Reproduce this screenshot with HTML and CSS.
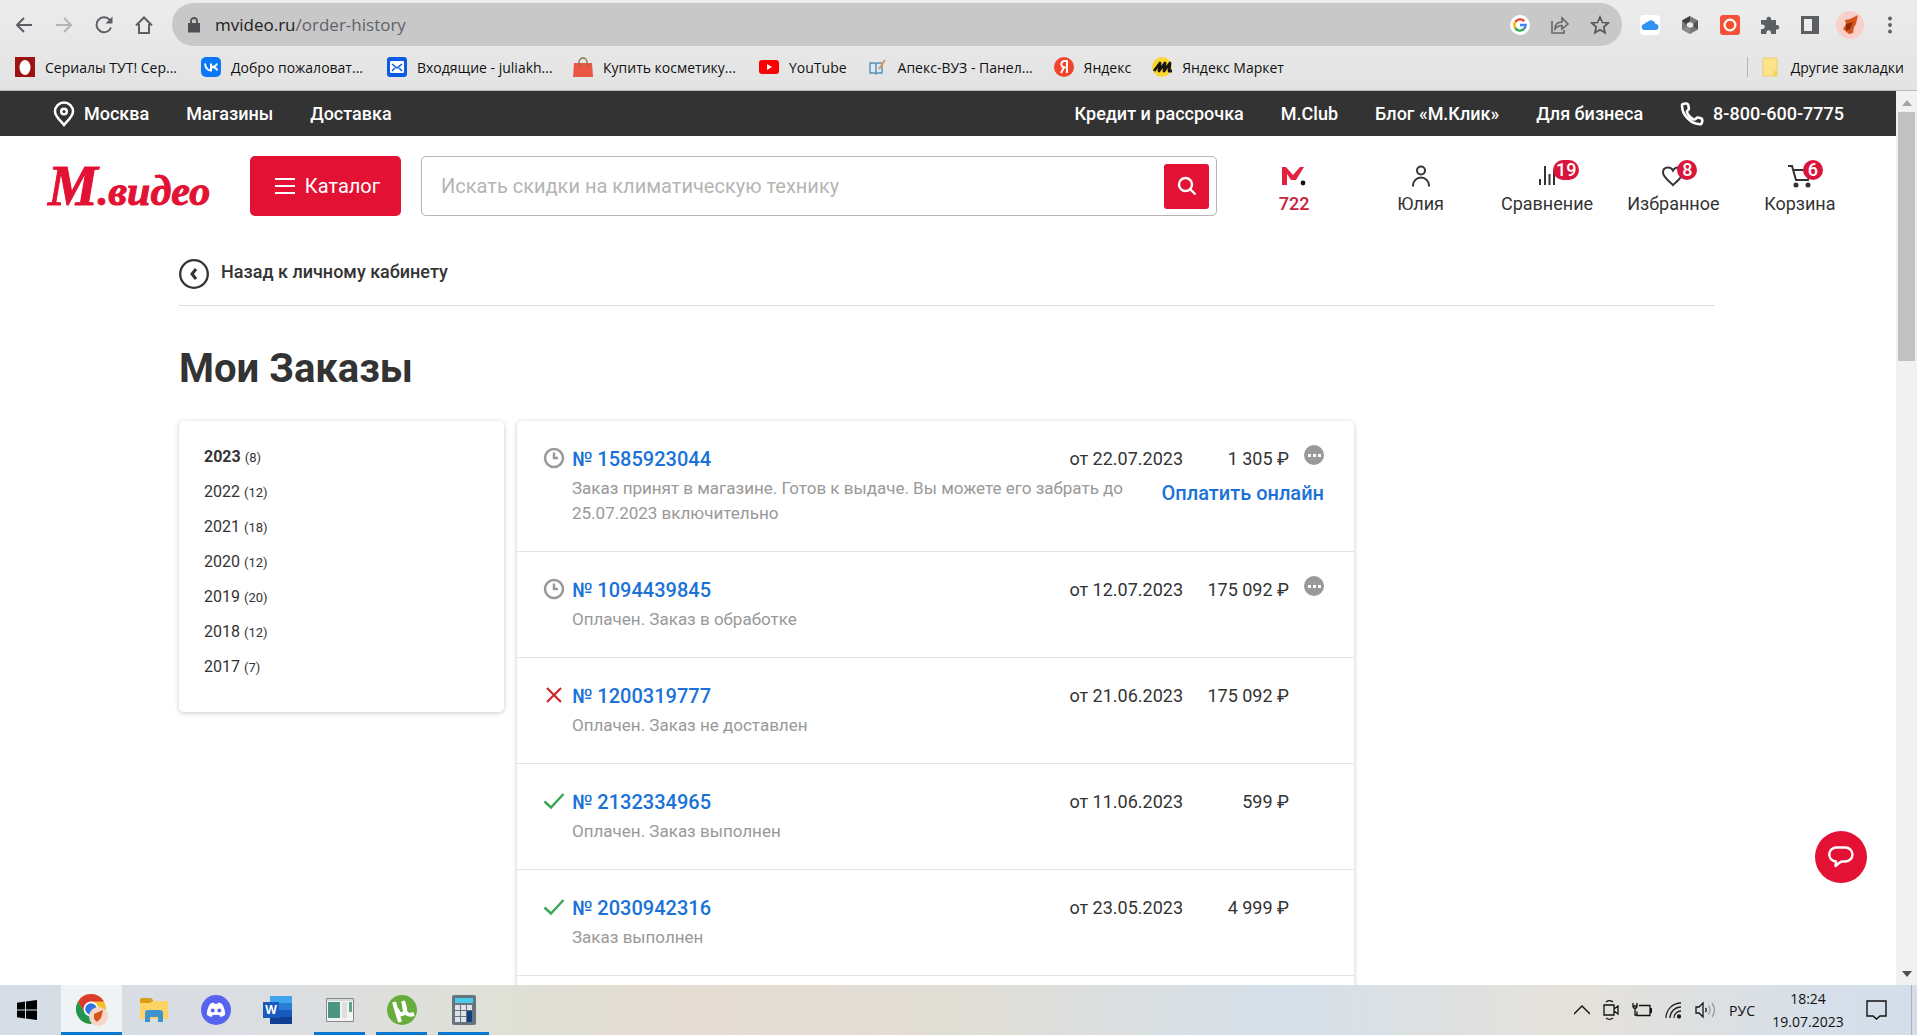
FILE: index.html
```html
<!DOCTYPE html>
<html lang="ru">
<head>
<meta charset="utf-8">
<meta name="viewport" content="width=device-width, initial-scale=1">
<title>Мои Заказы</title>
<link rel="stylesheet" href="styles.css">
</head>
<body>
<header class="browser">
  <div class="toolbar">
    <button class="tool" aria-label="Назад"><svg width="20" height="20" viewBox="0 0 20 20" fill="none" stroke="#5b5e62" stroke-width="2"><path d="M18 10H3M10 3l-7 7 7 7"/></svg></button>
    <button class="tool" aria-label="Вперёд"><svg width="20" height="20" viewBox="0 0 20 20" fill="none" stroke="#b3b5b7" stroke-width="2"><path d="M2 10h15M10 3l7 7-7 7"/></svg></button>
    <button class="tool" aria-label="Обновить"><svg width="20" height="20" viewBox="0 0 20 20" fill="none" stroke="#5b5e62" stroke-width="2"><path d="M17 12.500A7.500 7.500 0 1 1 15.800 5L17 6.500"/><path d="M18.500 1.500v7h-7z" fill="#5b5e62" stroke="none"/></svg></button>
    <button class="tool" aria-label="Домой"><svg width="20" height="20" viewBox="0 0 20 20" fill="none" stroke="#5b5e62" stroke-width="2"><path d="M2 10.500 10 2.500l8 8M5 9v9h10V9"/></svg></button>
    <div class="omnibox">
      <svg width="14" height="16" viewBox="0 0 14 16"><path d="M1 6h12v9.500H1z" fill="#4e5054"/><path d="M4 7V4a3 3 0 0 1 6 0v3" fill="none" stroke="#4e5054" stroke-width="1.800"/></svg>
      <div class="url"><span class="host">mvideo.ru</span>/order-history</div>
      <button class="tool" aria-label="Google"><svg width="20" height="20" viewBox="0 0 20 20" fill="none" stroke-width="2.400"><circle cx="10" cy="10" r="10" fill="#fff"/><path d="M14.200 6.200A5.600 5.600 0 0 0 5.300 7" stroke="#ea4335"/><path d="M5.300 7a5.600 5.600 0 0 0 0 6" stroke="#fbbc05"/><path d="M5.300 13a5.600 5.600 0 0 0 8.500 1.200" stroke="#34a853"/><path d="M13.800 14.200a5.600 5.600 0 0 0 1.800-4.200H10" stroke="#4285f4"/></svg></button>
      <button class="tool" aria-label="Поделиться"><svg width="20" height="20" viewBox="0 0 20 20" fill="none" stroke="#65686b" stroke-width="1.600"><path d="M2 6v12h12v-3M5 14c0-5 3-7 7-7V3l6 6-6 5v-3.500c-3 0-5 1-7 3.500z"/></svg></button>
      <button class="tool" aria-label="В закладки"><svg width="20" height="20" viewBox="0 0 20 20" fill="none" stroke="#55585c" stroke-width="1.700"><path d="m10 2 2.400 5.500 5.800.500-4.400 4 1.300 5.800L10 14.800l-5.100 3L6.200 12l-4.400-4 5.800-.500z"/></svg></button>
    </div>
    <div class="extensions">
      <button class="tool" aria-label="iCloud"><svg width="20" height="20" viewBox="0 0 20 20"><rect width="20" height="20" rx="4" fill="#fff"/><path d="M5 15a3 3 0 0 1-.5-6 4 4 0 0 1 3-2A4.500 4.500 0 0 1 15.500 9 3 3 0 0 1 15.500 15z" fill="#2f93f3"/></svg></button>
      <button class="tool" aria-label="Расширение"><svg width="20" height="20" viewBox="0 0 20 20"><path d="m10 1 8 4.500v9L10 19l-8-4.500v-9z" fill="#77797b"/><path d="M10 1v5l-4 3-4-3.500z" fill="#3c3d3f"/><path d="M2 14.500 6 12l4 2v5z" fill="#8a8b8d"/><path d="m18 14.500-4-2.500V8l4-2.500z" fill="#505254"/><path d="m10 7 3 1.500v3L10 13l-3-1.500v-3z" fill="#eaeaea"/></svg></button>
      <button class="tool" aria-label="Запись экрана"><svg width="20" height="20" viewBox="0 0 20 20"><rect width="20" height="20" rx="3" fill="#f4503a"/><circle cx="10" cy="10" r="5.400" fill="#f4502a" stroke="#fff" stroke-width="2.200"/></svg></button>
      <button class="tool" aria-label="Расширения"><svg width="20" height="20" viewBox="0 0 20 20"><path d="M1 5h5.500V4a2.300 2.300 0 0 1 4.600 0v1H16v5h1a2.300 2.300 0 0 1 0 4.600h-1V19h-5v-1.500a2.300 2.300 0 0 0-4.600 0V19H1v-5h1.500a2.300 2.300 0 0 0 0-4.600H1z" fill="#5b5e62"/></svg></button>
      <button class="tool" aria-label="Боковая панель"><svg width="20" height="20" viewBox="0 0 20 20"><path d="M1 1h18v18H1z" fill="#5b5e62"/><path d="M4 4h8v12H4z" fill="#ececec"/></svg></button>
      <button class="tool" aria-label="Профиль"><svg width="28" height="28" viewBox="0 0 28 28"><circle cx="14" cy="14" r="14" fill="#f8cfcb"/><path d="M9 9l5-1 8-4-2 9-2 3-1 6-4 1-6-5 3-5z" fill="#d6541a"/><path d="m10 13 7-2-3 7-4 2z" fill="#8e2c0d"/></svg></button>
      <button class="tool" aria-label="Меню"><svg width="20" height="20" viewBox="0 0 20 20" fill="#5b5e62"><circle cx="10" cy="3.500" r="1.900"/><circle cx="10" cy="10" r="1.900"/><circle cx="10" cy="16.500" r="1.900"/></svg></button>
    </div>
  </div>
  <nav class="bookmarks" aria-label="Закладки">
    <a class="mark cut" href="#"><svg width="20" height="20" viewBox="0 0 20 20"><rect width="20" height="20" fill="#9c1313"/><ellipse cx="10" cy="10.500" rx="5.500" ry="7.500" fill="#fff"/></svg><span>Сериалы ТУТ! Сер...</span></a>
    <a class="mark cut" href="#"><svg width="20" height="20" viewBox="0 0 20 20"><rect width="20" height="20" rx="5" fill="#0b78f7"/><path d="M4 6.500c.500 4.500 2.500 7 6 7v-7M16 6.500c-.500 2-2.500 3.500-6 3.500 3.500 0 5.500 1.500 6.300 3.500" fill="none" stroke="#fff" stroke-width="2"/></svg><span>Добро пожаловат...</span></a>
    <a class="mark cut" href="#"><svg width="20" height="20" viewBox="0 0 20 20"><rect width="20" height="20" rx="3" fill="#0d5be0"/><rect x="3" y="4" width="14" height="12" rx="1" fill="#fff"/><path d="m5 7 5 4 5-4M5 14l3-3M15 14l-3-3" fill="none" stroke="#0d5be0" stroke-width="1.500"/></svg><span>Входящие - juliakh...</span></a>
    <a class="mark cut" href="#"><svg width="20" height="20" viewBox="0 0 20 20"><path d="M1 6h18l1 14H0z" fill="#ea5742"/><path d="M6 10V5a4 4 0 0 1 8 0v5" fill="none" stroke="#8d6f4d" stroke-width="1.300"/></svg><span>Купить косметику...</span></a>
    <a class="mark" href="#"><svg width="20" height="20" viewBox="0 0 20 20"><rect y="3" width="20" height="14" rx="3" fill="#f00"/><path d="m8 7 5 3-5 3z" fill="#fff"/></svg><span>YouTube</span></a>
    <a class="mark cut" href="#"><svg width="20" height="20" viewBox="0 0 20 20"><path d="M2 6h5l1 1 1-1h5v10H9l-1 1-1-1H2z" fill="#dcebf5" stroke="#5b92b8" stroke-width="1.500"/><path d="M8 7v9" stroke="#5b92b8" stroke-width="1.500"/><path d="m11 12 6-9" stroke="#e59452" stroke-width="2"/></svg><span>Апекс-ВУЗ - Панел...</span></a>
    <a class="mark" href="#"><svg width="20" height="20" viewBox="0 0 20 20"><circle cx="10" cy="10" r="10" fill="#f0452b"/><path d="M13 16V4h-2.500a3.200 3.200 0 0 0 0 6.400H13M10 10.400 7 16" fill="none" stroke="#fff" stroke-width="1.900"/></svg><span>Яндекс</span></a>
    <a class="mark" href="#"><svg width="20" height="20" viewBox="0 0 20 20"><circle cx="10" cy="10" r="10" fill="#fbd72f"/><path d="M2 14 8 6l-1 8 6-8-1 8 6-8-1 8h3" fill="none" stroke="#151515" stroke-width="2.800" stroke-linejoin="round"/></svg><span>Яндекс Маркет</span></a>
    <a class="mark other" href="#"><svg width="16" height="20" viewBox="0 0 16 20"><path d="M1 1h14v18H1z" fill="#fde48b" stroke="#edcf68"/><path d="M11 19v-4l4-2v6z" fill="#f5d25c"/></svg><span>Другие закладки</span></a>
  </nav>
</header>

<div class="viewport">
  <div class="page">
    <nav class="topbar" aria-label="Информация">
      <a class="with-icon" href="#"><svg width="22" height="26" viewBox="0 0 22 26" fill="none" stroke="#fff" stroke-width="2.500"><path d="M11 24C7 19 2 15.500 2 10.500a9 9 0 0 1 18 0C20 15.500 15 19 11 24z"/><circle cx="11" cy="10.500" r="2.800"/></svg>Москва</a>
      <a href="#">Магазины</a>
      <a href="#">Доставка</a>
      <a class="push" href="#">Кредит и рассрочка</a>
      <a href="#">M.Club</a>
      <a href="#">Блог «М.Клик»</a>
      <a href="#">Для бизнеса</a>
      <a class="with-icon" href="tel:88006007775"><svg width="24" height="24" viewBox="0 0 24 24" fill="none" stroke="#fff" stroke-width="2.600" stroke-linejoin="round"><path d="M2 3.500C2 2 4 1.500 6 1.500c1.500 0 2 .500 2.300 2l.600 3c.300 1.500-2.400 2-2 3.500.800 3 4 6.500 7.200 7.500 1.500.500 2.200-2.400 3.700-2l3 .800c1.500.400 1.700 1 1.500 2.500-.200 2-.800 3.500-2.300 3.500C11 22.300 2 13 2 3.500z"/></svg>8-800-600-7775</a>
    </nav>

    <header class="site-header">
      <a class="logo" href="#"><span class="logo-initial">М</span>.видео</a>
      <button class="catalog"><svg width="20" height="16" viewBox="0 0 20 16" stroke="#fff" stroke-width="2"><path d="M0 1h20M0 8h20M0 15h20"/></svg>Каталог</button>
      <form class="search">
        <input type="search" aria-label="Поиск" placeholder="Искать скидки на климатическую технику">
        <button class="search-go" aria-label="Найти"><svg width="20" height="20" viewBox="0 0 20 20" fill="none" stroke="#fff" stroke-width="2.400"><circle cx="8.500" cy="8.500" r="6.500"/><path d="m13 13 5.500 5.500"/></svg></button>
      </form>
      <nav class="account" aria-label="Личное">
        <a class="bonus" href="#"><span class="glyph"><svg width="24" height="20" viewBox="0 0 24 20"><path d="M0 19V1h4l7 8 7-8h4l-8 13h-5L5 8v11z" fill="#e2233f"/><circle cx="21" cy="17" r="2.400" fill="#111"/></svg></span>722</a>
        <a href="#"><span class="glyph"><svg width="20" height="24" viewBox="0 0 20 24" fill="none" stroke="#333" stroke-width="2"><circle cx="10" cy="6.500" r="4"/><path d="M2 22.500v-1a8 8 0 0 1 16 0v1"/></svg></span>Юлия</a>
        <a href="#"><span class="glyph"><svg width="20" height="24" viewBox="0 0 20 24" stroke="#333" stroke-width="2"><path d="M3 15v6M8 2v19M12.500 10v11M17 6v15"/></svg><b class="badge">19</b></span>Сравнение</a>
        <a href="#"><span class="glyph"><svg width="24" height="22" viewBox="0 0 24 22" fill="none" stroke="#333" stroke-width="2"><path d="M12 20C8 16 2 12 2 7.500 2 4.500 4 2.500 7 2.500c2 0 4 1 5 3 1-2 3-3 5-3 3 0 5 2 5 5C22 12 16 16 12 20z"/></svg><b class="badge">8</b></span>Избранное</a>
        <a href="#"><span class="glyph"><svg width="26" height="24" viewBox="0 0 26 24" fill="none" stroke="#333" stroke-width="2"><path d="M1 2h4l4 14h12l3-10H7"/><circle cx="9" cy="21" r="1.500" fill="#333"/><circle cx="21" cy="21" r="1.500" fill="#333"/></svg><b class="badge">6</b></span>Корзина</a>
      </nav>
    </header>

    <main class="content">
      <a class="back" href="#"><svg width="30" height="30" viewBox="0 0 30 30" fill="none" stroke="#333"><circle cx="15" cy="15" r="13.800" stroke-width="2.300"/><path d="m17 10-4 5 4 5" stroke-width="3"/></svg><span>Назад к личному кабинету</span></a>
      <h1>Мои Заказы</h1>
      <div class="columns">
        <aside class="card years">
          <a class="current" href="#">2023 <small>(8)</small></a>
          <a href="#">2022 <small>(12)</small></a>
          <a href="#">2021 <small>(18)</small></a>
          <a href="#">2020 <small>(12)</small></a>
          <a href="#">2019 <small>(20)</small></a>
          <a href="#">2018 <small>(12)</small></a>
          <a href="#">2017 <small>(7)</small></a>
        </aside>
        <section class="card orders">
          <article class="order">
            <svg class="state" width="22" height="22" viewBox="0 0 22 22" fill="none" stroke="#999" stroke-width="2.500"><circle cx="11" cy="11" r="9"/><path d="M11 5.500V11h4"/></svg>
            <div class="body">
              <div class="line"><a class="number" href="#">№ 1585923044</a><span class="date">от 22.07.2023</span><span class="price">1 305 ₽</span><span class="more"><button class="dots" aria-label="Действия"><i></i><i></i><i></i></button></span></div>
              <div class="detail"><p>Заказ принят в магазине. Готов к выдаче. Вы можете его забрать до 25.07.2023 включительно</p><a class="pay" href="#">Оплатить онлайн</a></div>
            </div>
          </article>
          <article class="order">
            <svg class="state" width="22" height="22" viewBox="0 0 22 22" fill="none" stroke="#999" stroke-width="2.500"><circle cx="11" cy="11" r="9"/><path d="M11 5.500V11h4"/></svg>
            <div class="body">
              <div class="line"><a class="number" href="#">№ 1094439845</a><span class="date">от 12.07.2023</span><span class="price">175 092 ₽</span><span class="more"><button class="dots" aria-label="Действия"><i></i><i></i><i></i></button></span></div>
              <div class="detail"><p>Оплачен. Заказ в обработке</p></div>
            </div>
          </article>
          <article class="order">
            <svg class="state" width="22" height="22" viewBox="0 0 22 22" fill="none" stroke="#d0262e" stroke-width="2.200"><path d="m4 4 14 14M18 4 4 18"/></svg>
            <div class="body">
              <div class="line"><a class="number" href="#">№ 1200319777</a><span class="date">от 21.06.2023</span><span class="price">175 092 ₽</span><span class="more"></span></div>
              <div class="detail"><p>Оплачен. Заказ не доставлен</p></div>
            </div>
          </article>
          <article class="order">
            <svg class="state" width="22" height="22" viewBox="0 0 22 22" fill="none" stroke="#3aa757" stroke-width="2.500"><path d="m1.500 11.500 6.500 6L20.500 4"/></svg>
            <div class="body">
              <div class="line"><a class="number" href="#">№ 2132334965</a><span class="date">от 11.06.2023</span><span class="price">599 ₽</span><span class="more"></span></div>
              <div class="detail"><p>Оплачен. Заказ выполнен</p></div>
            </div>
          </article>
          <article class="order">
            <svg class="state" width="22" height="22" viewBox="0 0 22 22" fill="none" stroke="#3aa757" stroke-width="2.500"><path d="m1.500 11.500 6.500 6L20.500 4"/></svg>
            <div class="body">
              <div class="line"><a class="number" href="#">№ 2030942316</a><span class="date">от 23.05.2023</span><span class="price">4 999 ₽</span><span class="more"></span></div>
              <div class="detail"><p>Заказ выполнен</p></div>
            </div>
          </article>
          <div class="next-order"></div>
        </section>
      </div>
    </main>
    <button class="chat" aria-label="Чат"><svg width="26" height="22" viewBox="0 0 26 22" fill="none" stroke="#fff" stroke-width="2.400" stroke-linejoin="round"><path d="M8.500 1.500h9a7 7 0 0 1 0 14H14c-1.500 0-4.500 3-6.500 4.500L8 15.500A7 7 0 0 1 8.500 1.500z"/></svg></button>
  </div>
  <div class="scrollbar">
    <svg width="10" height="6" viewBox="0 0 10 6"><path d="m5 0 5 6H0z" fill="#a3a3a3"/></svg>
    <div class="thumb"></div>
    <svg class="down" width="10" height="6" viewBox="0 0 10 6"><path d="M0 0h10L5 6z" fill="#505050"/></svg>
  </div>
</div>

<footer class="taskbar">
  <button class="app start" aria-label="Пуск"><svg width="20" height="20" viewBox="0 0 20 20"><path d="M0 2.700 8 1.600v7.900H0zM9 1.500 20 0v9.500H9zM0 10.500h8v7.900l-8-1.100zM9 10.500h11V20L9 18.500z" fill="#000"/></svg></button>
  <button class="app active" aria-label="Chrome"><svg width="34" height="34" viewBox="0 0 34 34"><circle cx="16" cy="16" r="15" fill="#f5c22b"/><path d="M3 8.500A15 15 0 0 1 29 8.500H16L9.500 19.700z" fill="#dc3a2c"/><path d="M3 8.500A15 15 0 0 0 16 31l6.500-11.500H9.500z" fill="#209650"/><circle cx="16" cy="16" r="7.500" fill="#fff"/><circle cx="16" cy="16" r="5.800" fill="#2f74e0"/><circle cx="23.500" cy="23.500" r="9.500" fill="#f7d5cb"/><path d="m19 21 9-4-2 8-4 4-3-3z" fill="#d6541a"/></svg></button>
  <button class="app" aria-label="Проводник"><svg width="28" height="26" viewBox="0 0 28 26"><path d="M0 3a2 2 0 0 1 2-2h9l2 2v4H0z" fill="#d99e16"/><path d="M0 6h10l3-2h15v18H0z" fill="#fcd364"/><path d="M5 25v-9a3 3 0 0 1 3-3h12a3 3 0 0 1 3 3v9h-5v-5h-8v5z" fill="#3f94cf"/></svg></button>
  <button class="app" aria-label="Discord"><svg width="30" height="30" viewBox="0 0 30 30"><circle cx="15" cy="15" r="15" fill="#5663ee"/><path d="M9 9c1.500-.8 2.500-1.200 3.800-1.400l.7 1.200h3l.7-1.200C18.500 7.800 19.500 8.200 21 9c2 3 3.500 7 3 11-1.500 1-3 1.500-4.500 2l-1.200-2h-6.600l-1.200 2C9 21.500 7.500 21 6 20c-.500-4 1-8 3-11z" fill="#fff"/><circle cx="11.700" cy="15.500" r="2" fill="#5663ee"/><circle cx="18.300" cy="15.500" r="2" fill="#5663ee"/></svg></button>
  <button class="app" aria-label="Word"><span class="word"><b>W</b></span></button>
  <button class="app open" aria-label="Приложение"><svg width="28" height="24" viewBox="0 0 28 24"><path d="M.500.500h27v23H.500z" fill="#f3f3f3" stroke="#85898c"/><path d="M2 4h12v16H2z" fill="#4b9683"/><path d="M16 4h5v16h-5z" fill="#dcdedf"/><path d="M23 4h3v10h-3z" fill="#5fa489"/><path d="M1 2h26" stroke="#b9bcbe"/></svg></button>
  <button class="app open" aria-label="Торрент"><svg width="30" height="30" viewBox="0 0 30 30"><circle cx="15" cy="15" r="15" fill="#68ad3c"/><path d="m7 7 6 20M10 14c2 8 9 6 8-1l-2-7M17 11c1 8 4 10 10 8" fill="none" stroke="#fff" stroke-width="4"/></svg></button>
  <button class="app open" aria-label="Калькулятор"><svg width="24" height="30" viewBox="0 0 24 30"><rect width="24" height="30" rx="2" fill="#67737d"/><path d="M3 3h18v5H3z" fill="#4bcbea"/><path d="M3 10h5v5H3zM9 10h5v5H9zM15 10h5v5h-5zM3 16h5v5H3zM9 16h5v5H9zM3 22h5v5H3zM9 22h5v5H9z" fill="#dfe3e7"/><path d="M15 16h5v11h-5z" fill="#123f7d"/></svg></button>
  <div class="tray">
    <svg width="16" height="10" viewBox="0 0 16 10" fill="none" stroke="#111" stroke-width="1.400"><path d="m0 9 8-8 8 8"/></svg>
    <svg width="16" height="20" viewBox="0 0 16 20" fill="none" stroke="#111" stroke-width="1.300"><path d="M1 5h10v10H1zM11 9l4-3v8l-4-3M3 2c2-1.500 5-1.500 7 0M3 18c2 1.500 5 1.500 7 0"/></svg>
    <svg width="20" height="16" viewBox="0 0 20 16" fill="none" stroke="#111" stroke-width="1.300"><path d="M7 3.500h11v10H5v-4M19.300 6v5M1 1v3h4V1M1 4c0 3 4 3 4 0M3 6v7h2"/></svg>
    <svg width="17" height="17" viewBox="0 0 17 17" fill="none" stroke="#222" stroke-width="1.300"><path d="M1 16A15 15 0 0 1 16 1M5 16A11 11 0 0 1 16 5M9 16a7 7 0 0 1 7-7"/><circle cx="14" cy="14.500" r="1.500" fill="#111"/></svg>
    <svg width="21" height="18" viewBox="0 0 21 18" fill="none" stroke="#111" stroke-width="1.300"><path d="M1 6h3l4-4v14l-4-4H1zM10.500 7q1.500 2 0 4"/><path d="M13.500 4.500q3 4.500 0 9M17 2q5 7 0 14" stroke="#999"/></svg>
    <span class="lang">РУС</span>
    <time class="clock"><span>18:24</span><span>19.07.2023</span></time>
    <svg width="21" height="20" viewBox="0 0 21 20" fill="none" stroke="#111" stroke-width="1.400"><path d="M1 1h19v15h-6l-3.500 3L7 16H1z"/></svg>
    <span class="peek"></span>
  </div>
</footer>
</body>
</html>
```
FILE: styles.css
```css
* {
  box-sizing: border-box;
}

body {
  margin: 0;
  height: 100vh;
  display: flex;
  flex-direction: column;
  overflow: hidden;
  background: #fff;
  color: #333;
  font-family: Roboto, sans-serif;
  font-size: 18px;
}

a {
  color: inherit;
  text-decoration: none;
}

button {
  border: 0;
  padding: 0;
  background: none;
  font: inherit;
  color: inherit;
}

svg {
  display: block;
  flex: none;
}

/* Browser chrome */
.browser {
  flex: none;
  background: linear-gradient(#ececec, #e3e3e3);
  border-bottom: 1px solid #b9b9b9;
  font-family: "Open Sans", sans-serif;
}

.toolbar {
  display: flex;
  align-items: center;
  padding: 3px 7px 0 4px;
}

.tool {
  width: 40px;
  height: 40px;
  flex: none;
  display: flex;
  align-items: center;
  justify-content: center;
}

.omnibox {
  flex: 1;
  height: 43px;
  margin: 0 8px;
  padding: 0 2px 0 15px;
  border-radius: 22px;
  background: #c8c8c9;
  display: flex;
  align-items: center;
}

.url {
  flex: 1;
  padding-left: 14px;
  font-size: 17px;
  color: #5f6368;
}

.host {
  color: #202124;
}

.extensions {
  display: flex;
}

.bookmarks {
  height: 44px;
  display: flex;
  align-items: center;
  gap: 21px;
  padding: 0 13px 2px 15px;
  font-size: 14px;
  color: #111;
  white-space: nowrap;
}

.mark {
  display: flex;
  align-items: center;
  gap: 10px;
}

.cut span {
  width: 135px;
}

.other {
  margin-left: auto;
  padding-left: 14px;
  border-left: 1px solid #b5b5b5;
  gap: 13px;
}

/* Page area */
.viewport {
  flex: 1;
  min-height: 0;
  display: flex;
}

.page {
  position: relative;
  flex: 1;
  min-width: 0;
  overflow: hidden;
}

.scrollbar {
  width: 21px;
  padding: 9px 0 8px;
  background: #f1f1f1;
  display: flex;
  flex-direction: column;
  align-items: center;
  gap: 6px;
}

.thumb {
  width: 17px;
  height: 249px;
  background: #c1c1c1;
}

.down {
  margin-top: auto;
}

.topbar {
  height: 45px;
  padding: 0 52px 0 53px;
  display: flex;
  align-items: center;
  gap: 37px;
  background: #333;
  color: #fff;
  font-weight: 500;
  white-space: nowrap;
}

.with-icon {
  display: flex;
  align-items: center;
  gap: 9px;
}

.push {
  margin-left: auto;
}

.site-header {
  height: 92px;
  padding: 20px 33px 0 48px;
  display: flex;
  align-items: flex-start;
}

.logo {
  width: 162px;
  height: 60px;
  margin-right: 40px;
  color: #e31235;
  font-family: "Liberation Serif", serif;
  font-size: 42px;
  line-height: 60px;
  font-weight: 700;
  font-style: italic;
  white-space: nowrap;
  -webkit-text-stroke: 1px #e31235;
}

.logo-initial {
  font-size: 56px;
}

.catalog {
  width: 151px;
  height: 60px;
  margin-right: 20px;
  padding-left: 4px;
  border-radius: 5px;
  background: #e31235;
  color: #fff;
  font-size: 20px;
  display: flex;
  align-items: center;
  justify-content: center;
  gap: 10px;
}

.search {
  flex: 1;
  height: 60px;
  margin-right: 14px;
  padding: 0 7px 0 19px;
  border: 1px solid #b5b5b5;
  border-radius: 5px;
  display: flex;
  align-items: center;
}

.search input {
  flex: 1;
  min-width: 0;
  border: 0;
  padding: 0;
  outline: 0;
  background: none;
  color: #333;
  font: inherit;
  font-size: 20px;
}

.search input::placeholder {
  color: #b5b5b5;
}

.search-go {
  width: 45px;
  height: 45px;
  border-radius: 3px;
  background: #e31235;
  display: flex;
  align-items: center;
  justify-content: center;
}

.account {
  width: 632px;
  height: 60px;
  display: flex;
  line-height: 22px;
}

.account a {
  flex: 1;
  padding-top: 7px;
  display: flex;
  flex-direction: column;
  align-items: center;
  gap: 5px;
}

.bonus {
  color: #c8203c;
  font-weight: 500;
}

.glyph {
  position: relative;
  height: 25px;
  display: flex;
  align-items: center;
}

.badge {
  position: absolute;
  top: -3px;
  left: 16px;
  min-width: 20px;
  height: 20px;
  padding: 0 3px;
  border-radius: 10px;
  background: #d9163a;
  color: #fff;
  line-height: 20px;
  font-weight: 500;
  text-align: center;
}

.content {
  padding: 31px 181px 0 179px;
}

.back {
  display: flex;
  align-items: flex-start;
  gap: 12px;
  padding-bottom: 16px;
  border-bottom: 1px solid #ddd;
  font-weight: 500;
  line-height: 26px;
}

h1 {
  margin: 39px 0 28px;
  font-size: 40px;
  line-height: 48px;
  font-weight: 700;
}

.columns {
  display: grid;
  grid-template-columns: 325px minmax(0, 837px);
  gap: 13px;
  align-items: start;
}

.card {
  border-radius: 5px;
  background: #fff;
  box-shadow: 0 1px 5px rgba(0, 0, 0, 0.22);
}

.years {
  display: flex;
  flex-direction: column;
  padding: 18px 25px 28px;
  font-size: 16px;
  line-height: 35px;
}

.years small {
  font-size: 13px;
  line-height: 16px;
  font-weight: 400;
}

.current {
  font-weight: 700;
}

.order {
  display: flex;
  gap: 7px;
  padding: 24px 30px 25px 26px;
  border-bottom: 1px solid #e3e3e3;
}

.state {
  margin-top: 2px;
}

.body {
  flex: 1;
}

.line {
  display: flex;
  line-height: 28px;
}

.number {
  flex: 1;
  font-size: 20px;
}

.number,
.pay {
  color: #1a72d8;
  font-weight: 500;
}

.price {
  width: 106px;
  text-align: right;
}

.more {
  width: 35px;
  display: flex;
  justify-content: flex-end;
}

.dots {
  width: 20px;
  height: 20px;
  border-radius: 50%;
  background: #999;
  display: flex;
  align-items: center;
  justify-content: center;
  gap: 2px;
}

.dots i {
  width: 3px;
  height: 3px;
  background: #fff;
}

.detail {
  display: flex;
  gap: 20px;
  padding-top: 3px;
  font-size: 17px;
  line-height: 25px;
  color: #999;
}

.detail p {
  flex: 1;
  margin: 0;
}

.pay {
  font-size: 20px;
  line-height: 34px;
  height: 34px;
}

.next-order {
  height: 130px;
}

.chat {
  position: absolute;
  right: 29px;
  bottom: 102px;
  width: 52px;
  height: 52px;
  border-radius: 50%;
  background: #e31235;
  display: flex;
  align-items: center;
  justify-content: center;
}

/* Taskbar */
.taskbar {
  flex: none;
  height: 50px;
  display: flex;
  gap: 1px;
  background: linear-gradient(90deg, #d5dde7 0%, #dcdee0 16%, #dfe0d6 26%, #e5dcd2 36%, #e0ddd5 50%, #d5e0ea 67%, #e5e1da 82%, #d6dfe9 95%, #d3deea 100%);
  color: #111;
  font-family: "Open Sans", sans-serif;
}

.app {
  width: 61px;
  position: relative;
  display: flex;
  align-items: center;
  justify-content: center;
}

.start {
  width: 60px;
  padding-right: 6px;
}

.active {
  background: #f0f3f6;
}

.open::after,
.active::after {
  content: "";
  position: absolute;
  left: 5px;
  right: 5px;
  bottom: 0;
  height: 3px;
  background: #0a78d0;
}

.active::after {
  left: 0;
  right: 0;
}

.word {
  width: 29px;
  height: 28px;
  padding: 6px 0;
  border-left: 7px solid transparent;
  background: linear-gradient(#41a5ee 0 25%, #2b7cd3 25% 50%, #185abd 50% 75%, #103f91 75%) padding-box;
  display: flex;
}

.word b {
  width: 16px;
  height: 16px;
  flex: none;
  margin-left: -7px;
  background: #185abd;
  color: #fff;
  font-size: 12px;
  line-height: 16px;
}

.tray {
  margin-left: auto;
  display: flex;
  align-items: center;
  gap: 13px;
}

.lang {
  font-size: 14px;
}

.clock {
  width: 80px;
  margin-right: 5px;
  display: flex;
  flex-direction: column;
  align-items: center;
  font-size: 14px;
  line-height: 23px;
}

.peek {
  width: 6px;
  height: 50px;
  margin-left: 11px;
  border-left: 1px solid #aab2ba;
}
```
